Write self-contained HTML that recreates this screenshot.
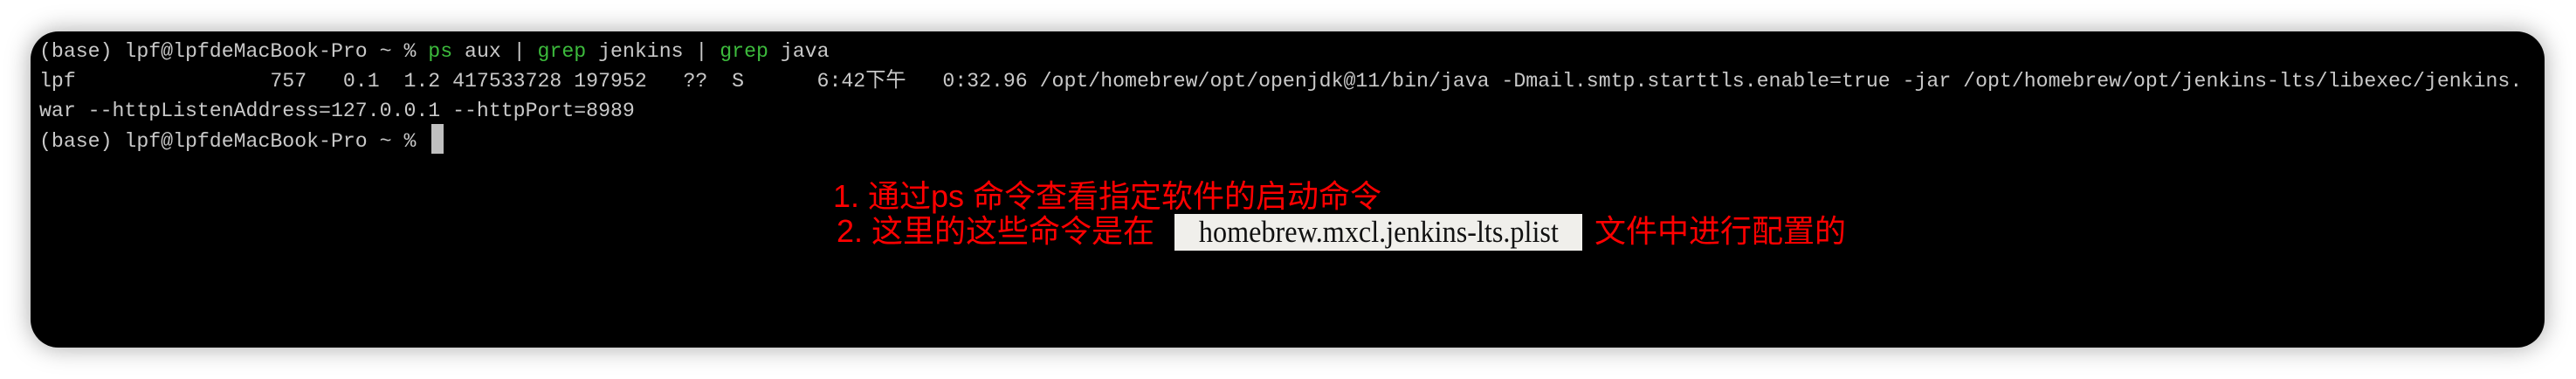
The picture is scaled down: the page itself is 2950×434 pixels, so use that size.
<!DOCTYPE html>
<html><head><meta charset="utf-8"><style>
html,body{margin:0;padding:0;background:#fff;width:2950px;height:434px;overflow:hidden;}
.term{position:absolute;left:35px;top:36px;width:2879px;height:362px;background:#000;border-radius:32px;box-shadow:0 0 28px rgba(0,0,0,0.35);}
.l{position:absolute;left:45px;font-family:"Liberation Mono","Noto Sans CJK SC",monospace;font-size:23.2px;color:#c9c9c9;white-space:pre;line-height:34px;}
.g{color:#3cba3c;}
.cur{position:absolute;left:494px;top:142px;width:14px;height:34px;background:#c0c0c0;}
.r{position:absolute;font-family:"Liberation Sans","Noto Sans CJK SC",sans-serif;font-size:36px;color:#f00;white-space:pre;line-height:40px;}
.box{position:absolute;left:1345px;top:245px;width:467px;height:42px;background:#f0efeb;color:#111;font-family:"Liberation Serif",serif;font-size:35px;line-height:42px;text-align:center;white-space:pre;overflow:hidden;}
.box span{display:inline-block;transform:scaleX(0.92);transform-origin:center;}
</style></head><body>
<div class="term"></div>
<div class="l" style="top:42px">(base) lpf@lpfdeMacBook-Pro ~ % <span class="g">ps</span> aux | <span class="g">grep</span> jenkins | <span class="g">grep</span> java</div>
<div class="l" style="top:76px">lpf                757   0.1  1.2 417533728 197952   ??  S      6:42下午   0:32.96 /opt/homebrew/opt/openjdk@11/bin/java -Dmail.smtp.starttls.enable=true -jar /opt/homebrew/opt/jenkins-lts/libexec/jenkins.</div>
<div class="l" style="top:110px">war --httpListenAddress=127.0.0.1 --httpPort=8989</div>
<div class="l" style="top:145px">(base) lpf@lpfdeMacBook-Pro ~ % </div>
<div class="cur"></div>
<div class="r" style="left:954px;top:205px">1. 通过ps 命令查看指定软件的启动命令</div>
<div class="r" style="left:958px;top:245px">2. 这里的这些命令是在</div>
<div class="box"><span>homebrew.mxcl.jenkins-lts.plist</span></div>
<div class="r" style="left:1826px;top:245px">文件中进行配置的</div>
</body></html>
